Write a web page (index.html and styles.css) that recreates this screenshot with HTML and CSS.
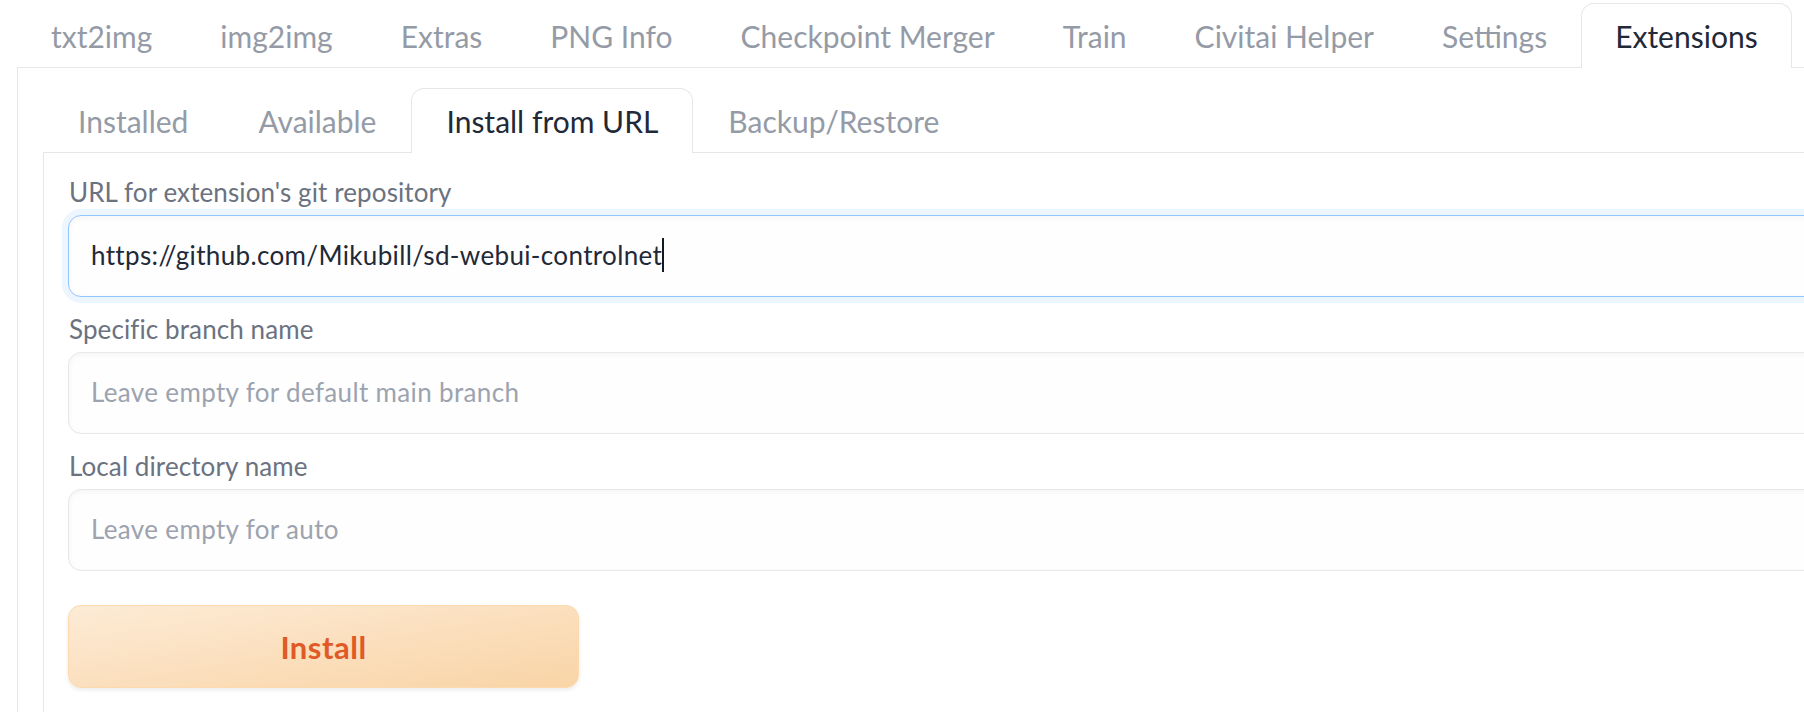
FILE: index.html
```html
<!DOCTYPE html>
<html lang="en">
<head>
<meta charset="utf-8">
<title>Extensions - Install from URL</title>
<link rel="stylesheet" href="styles.css">
</head>
<body>
<div class="app">
  <nav class="tab-nav">
    <button class="tab">txt2img</button>
    <button class="tab">img2img</button>
    <button class="tab">Extras</button>
    <button class="tab">PNG Info</button>
    <button class="tab">Checkpoint Merger</button>
    <button class="tab">Train</button>
    <button class="tab">Civitai Helper</button>
    <button class="tab">Settings</button>
    <button class="tab active">Extensions</button>
  </nav>
  <div class="panel outer">
    <nav class="tab-nav">
      <button class="tab">Installed</button>
      <button class="tab">Available</button>
      <button class="tab active">Install from URL</button>
      <button class="tab">Backup/Restore</button>
    </nav>
    <div class="panel inner">
      <div class="field">
        <span class="label">URL for extension's git repository</span>
        <div class="textbox focused"><span class="value">https://github.com/Mikubill/sd-webui-controlnet</span><span class="caret"></span></div>
      </div>
      <div class="field">
        <span class="label">Specific branch name</span>
        <div class="textbox"><span class="placeholder">Leave empty for default main branch</span></div>
      </div>
      <div class="field">
        <span class="label">Local directory name</span>
        <div class="textbox"><span class="placeholder">Leave empty for auto</span></div>
      </div>
      <button class="btn-primary">Install</button>
    </div>
  </div>
</div>
</body>
</html>
```

FILE: styles.css
```css
html, body {
  margin: 0;
  padding: 0;
  background: #ffffff;
  overflow: hidden;
}

body {
  font-family: Lato, "Noto Sans", "Liberation Sans", sans-serif;
  color: #1f2937;
}

.app {
  width: 1950px;
  padding-left: 17px;
}

.tab-nav {
  display: flex;
  align-items: flex-end;
}

.app > .tab-nav {
  padding-top: 3px;
}

.tab {
  font-family: inherit;
  font-size: 30px;
  line-height: 64px;
  height: 65px;
  padding: 0 33px;
  margin: 0 0 -1px 0;
  border: 1px solid transparent;
  border-bottom: none;
  border-radius: 13px 13px 0 0;
  background: transparent;
  color: #959ba6;
  position: relative;
  z-index: 1;
  white-space: nowrap;
  cursor: pointer;
}

.outer .tab {
  padding: 0 34px;
}

.tab.active {
  background: #ffffff;
  border-color: #e5e7eb;
  color: #1f2937;
}

.panel {
  border-top: 1px solid #e5e7eb;
  border-left: 1px solid #e5e7eb;
}

.outer {
  padding: 20px 0 0 25px;
}

.inner {
  padding: 19px 0 40px 24px;
  display: flex;
  flex-direction: column;
  gap: 12px;
}

.field {
  display: flex;
  flex-direction: column;
  gap: 3px;
}

.label {
  font-size: 26px;
  line-height: 40px;
  letter-spacing: 0.1px;
  color: #6b7280;
  padding-left: 1px;
}

.textbox {
  height: 82px;
  box-sizing: border-box;
  border: 1px solid #e5e7eb;
  border-radius: 13px;
  background: #fefefe;
  box-shadow: inset 0 2px 6px rgba(0, 0, 0, 0.04);
  padding: 0 0 3px 22px;
  display: flex;
  align-items: center;
  font-size: 26px;
  letter-spacing: 0.35px;
}

.textbox.focused {
  border-color: #93c5fd;
  box-shadow: 0 0 0 6px #edf5fe, inset 0 2px 6px rgba(0, 0, 0, 0.04);
}

.value {
  color: #1f2937;
}

.placeholder {
  color: #9ca3af;
}

.caret {
  display: inline-block;
  width: 2px;
  height: 34px;
  background: #111827;
}

.btn-primary {
  margin-top: 22px;
  width: 511px;
  height: 83px;
  border: 1px solid #fcd9ae;
  border-radius: 13px;
  background: linear-gradient(to bottom right, #fdebd6, #f9d4a6);
  box-shadow: 0 2px 4px rgba(0, 0, 0, 0.08);
  font-family: inherit;
  font-size: 31px;
  font-weight: 700;
  letter-spacing: 0.5px;
  color: #df5a26;
  cursor: pointer;
}
```
